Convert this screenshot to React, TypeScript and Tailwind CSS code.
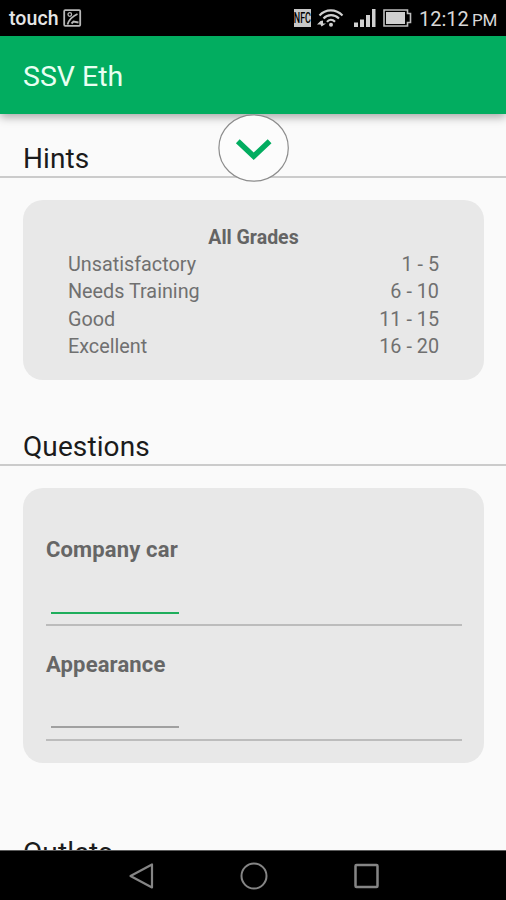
const GRADES = [
  { label: 'Unsatisfactory', range: '1 - 5' },
  { label: 'Needs Training', range: '6 - 10' },
  { label: 'Good', range: '11 - 15' },
  { label: 'Excellent', range: '16 - 20' },
];

function StatusBar() {
  return (
    <div className="flex h-9 shrink-0 items-center bg-black pr-[8px] pl-[9px] text-[#d8d8d8]">
      <span className="mt-[2px] text-[19.5px] leading-9 font-medium tracking-[0.1px] text-[#e6e6e6]">touch</span>
      <svg className="ml-[4px]" width="19" height="18" viewBox="0 0 19 18" fill="none" stroke="#b8b8b8" strokeWidth="1.8">
        <rect x="1.2" y="1.2" width="16" height="15.6" rx="1" />
        <path d="M4.500 15.500C6 10.500 9 7.500 14.500 5M8.500 14.500L10.500 12.500L15.500 13.500" />
        <circle cx="6.800" cy="5.500" r="1.800" strokeWidth="1.300" />
      </svg>
      <span className="ml-auto flex h-[18px] w-[17px] items-center justify-center bg-[#c8c8c8]">
        <span className="scale-x-[.6] text-[15px] leading-none font-medium text-black">NFC</span>
      </span>
      <svg className="ml-[6px]" width="27" height="18" viewBox="0 0 27 18" fill="none" stroke="#d0d0d0" strokeWidth="2.1">
        <path d="M2.500 6.500C8.500-0.400 19 -0.400 25.500 6.500M6.500 9.500C10.500 5 17.500 5 22 9.500M10 12.800C12 10 15.500 10 18 12.800" />
        <circle cx="14" cy="15.700" r="2" fill="#d0d0d0" stroke="none" />
        <path d="M3.500 12L0 15.500H3.500L4.500 17.500L9 14.500H6V11.500Z" fill="#d0d0d0" stroke="none" />
      </svg>
      <svg className="ml-[10px]" width="22" height="18" viewBox="0 0 22 18" fill="#d0d0d0">
        <path d="M0 13.500h4V18H0zM6 10.500h4V18H6zM12 6h4v12h-4zM18 0h3.500v18H18z" />
      </svg>
      <svg className="ml-[7px]" width="29" height="18" viewBox="0 0 29 18">
        <path d="M1 1h23.500v3.500h3v9h-3V17H1z" fill="none" stroke="#bdbdbd" strokeWidth="1.600" />
        <rect x="3" y="3" width="19" height="12" fill="#d0d0d0" />
      </svg>
      <span className="mt-[3px] ml-[7px] flex items-baseline leading-9">
        <span className="w-[49px] text-[20px] tracking-[0px] whitespace-nowrap">12:12</span>
        <span className="ml-[4px] w-[26px] text-[17px] tracking-[-0.2px]">PM</span>
      </span>
    </div>
  );
}

function AppBar() {
  return (
    <header className="relative z-10 flex h-[78px] shrink-0 items-center bg-[#02ad60] pl-[23px] shadow-[0_3px_9px_rgba(0,0,0,0.34)]">
      <h1 className="mt-[4px] text-[28.5px] leading-none text-[#e9fff2]">SSV Eth</h1>
    </header>
  );
}

function SectionTitle({ children }: { children: string }) {
  return (
    <h2 className="h-[39px] border-b-2 border-[#cbcbcb] pl-[23px] text-[28px] leading-[39px] tracking-[0.1px] text-[#1b1b1b]">
      {children}
    </h2>
  );
}

function Question({ label, focused }: { label: string; focused?: boolean }) {
  return (
    <div className="h-[115px] border-b-2 border-[#bcbcbc]">
      <div className="pt-[24px] text-[22px] leading-[30px] font-bold tracking-[0.15px] text-[#666]">{label}</div>
      <div
        className={
          focused
            ? 'mt-[47px] ml-[5px] h-[2px] w-[128px] bg-[#1fae5c]'
            : 'mt-[46px] ml-[5px] h-[2px] w-[128px] bg-[#a0a0a0]'
        }
      />
    </div>
  );
}

function ExpandButton() {
  return (
    <button className="absolute top-[114px] left-[218px] z-20" aria-label="Expand">
      <svg width="72" height="68" viewBox="0 0 72 68" fill="none">
        <ellipse cx="35.600" cy="34" rx="34.700" ry="33.200" fill="#fcfcfc" stroke="#8c8c8c" strokeWidth="1.200" />
        <path d="M19.800 27.200L35.700 42.200L51.600 27.200" stroke="#02ad60" strokeWidth="5.500" />
      </svg>
    </button>
  );
}

function NavBar() {
  return (
    <nav className="flex h-[50px] shrink-0 items-center justify-center gap-[86px] border-t border-[#5c5c5c] bg-black pl-px">
      <svg width="26" height="28" viewBox="0 0 26 28" fill="none" stroke="#858585" strokeWidth="2.200" strokeLinejoin="round">
        <path d="M2.500 14L24 2.500V25.500Z" />
      </svg>
      <svg width="28" height="28" viewBox="0 0 28 28" fill="none" stroke="#858585" strokeWidth="2">
        <circle cx="14" cy="14" r="12.500" />
      </svg>
      <svg width="26" height="28" viewBox="0 0 26 28" fill="none" stroke="#858585" strokeWidth="2.500">
        <rect x="1.500" y="3" width="22" height="22" rx="1" />
      </svg>
    </nav>
  );
}

export default function App() {
  return (
    <div className="relative flex h-[900px] w-[506px] flex-col overflow-hidden bg-[#fafafa] font-['Roboto',sans-serif]">
      <StatusBar />
      <AppBar />
      <ExpandButton />
      <main className="min-h-0 flex-1 overflow-hidden pt-[25px]">
        <SectionTitle>Hints</SectionTitle>
        <section className="mr-[22px] ml-[23px] mt-[22px] h-[180px] rounded-[20px] bg-[#e8e8e8] px-[45px] pt-[24px] text-[19.800px] leading-[27.200px] text-[#707070]">
          <h3 className="text-center text-[19.500px] font-bold text-[#646464]">All Grades</h3>
          {GRADES.map((grade) => (
            <div key={grade.label} className="flex justify-between">
              <span>{grade.label}</span>
              <span>{grade.range}</span>
            </div>
          ))}
        </section>
        <div className="mt-[47px]">
          <SectionTitle>Questions</SectionTitle>
        </div>
        <section className="mr-[22px] ml-[23px] mt-[22px] h-[275px] rounded-[20px] bg-[#e8e8e8] pr-[22px] pl-[23px] pt-[23px]">
          <Question label="Company car" focused />
          <Question label="Appearance" />
        </section>
        <div className="mt-[70px]">
          <SectionTitle>Outlets</SectionTitle>
        </div>
      </main>
      <NavBar />
    </div>
  );
}
